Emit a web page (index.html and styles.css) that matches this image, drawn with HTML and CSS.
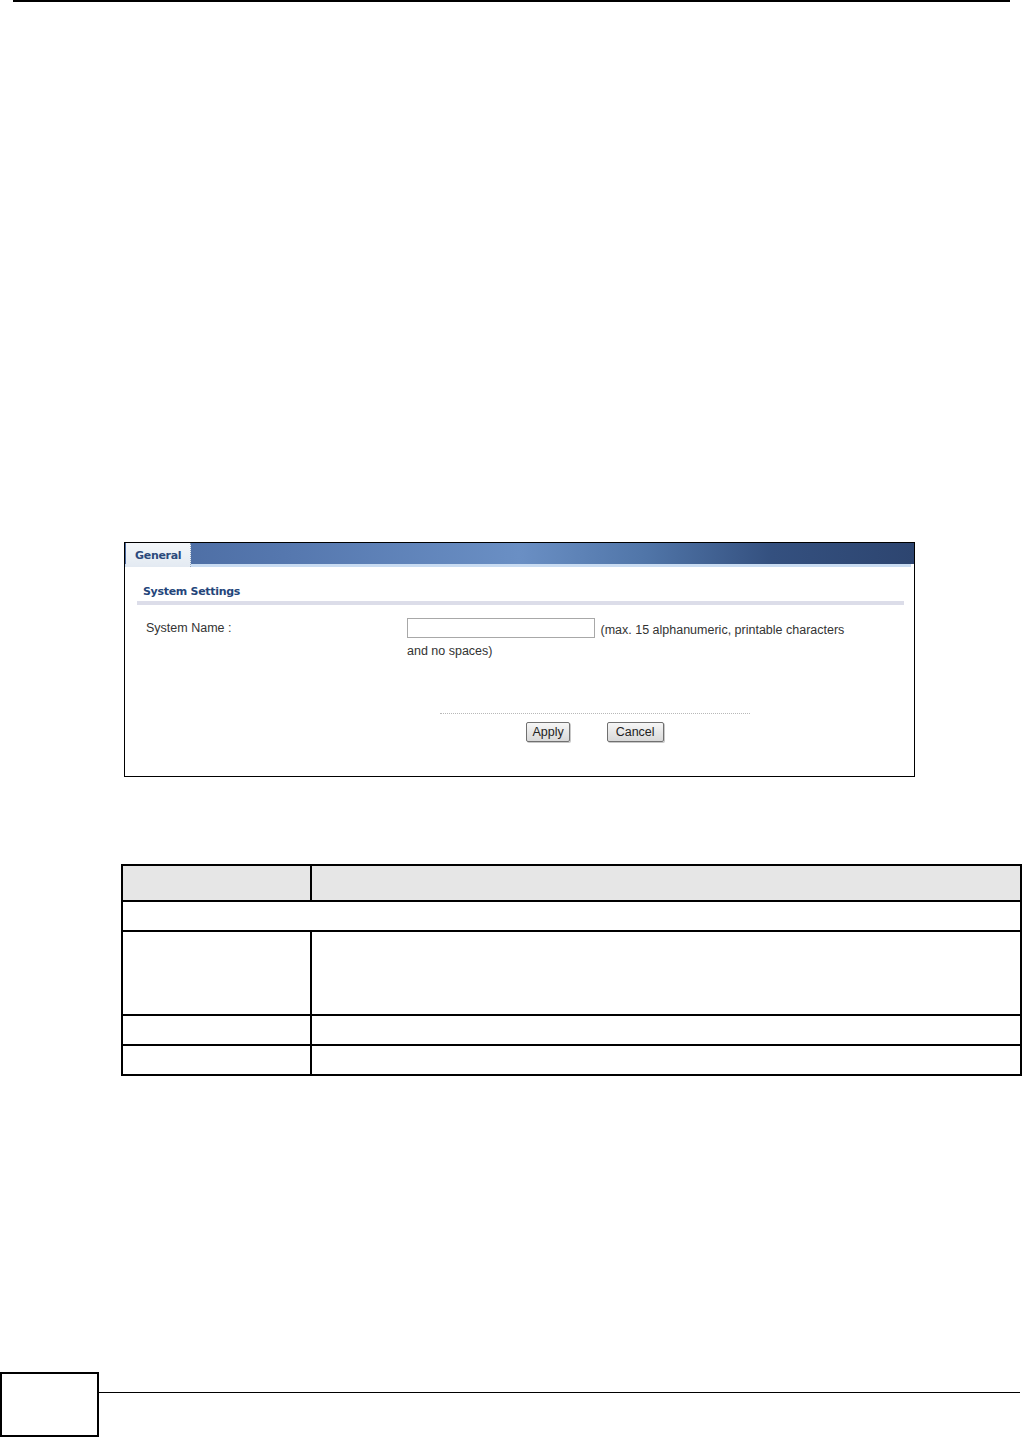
FILE: index.html
```html
<!DOCTYPE html>
<html lang="en">
<head>
    <meta charset="UTF-8">
    <meta name="viewport" content="width=device-width, initial-scale=1.0">
    <title>General</title>
    <link rel="stylesheet" href="styles.css">
</head>
<body>
    <div class="page">
        <div class="top-rule"></div>

        <div class="figure">
            <div class="tab-bar">
                <div class="tab">General</div>
            </div>
            <div class="tab-line"></div>
            <div class="panel">
                <div class="section-title">System Settings</div>
                <div class="form-row">
                    <label for="sysName">System Name :</label>
                    <div class="field">
                        <input type="text" id="sysName">
                        <span class="hint">(max. 15 alphanumeric, printable characters</span>
                        <div class="hint-more">and no spaces)</div>
                    </div>
                </div>
                <div class="actions">
                    <button type="button" class="btn">Apply</button>
                    <button type="button" class="btn btn-wide">Cancel</button>
                </div>
            </div>
        </div>

        <table class="desc">
            <tr class="head"><td class="label-col"></td><td></td></tr>
            <tr><td colspan="2"></td></tr>
            <tr class="tall"><td></td><td></td></tr>
            <tr><td></td><td></td></tr>
            <tr><td></td><td></td></tr>
        </table>

        <div class="footer">
            <div class="page-box"></div>
            <div class="footer-rule"></div>
        </div>
    </div>
</body>
</html>
```

FILE: styles.css
```css
body {
    margin: 0;
    background-color: #fff;
    font-family: 'Liberation Sans', Arial, sans-serif;
}
.page {
    width: 1023px;
    height: 1437px;
    display: flex;
    flex-direction: column;
}
.top-rule {
    height: 2px;
    margin: 0 13px;
    background-color: #000;
}

/* screenshot of the web configurator */
.figure {
    margin: 540px 0 0 124px;
    width: 789px;
    height: 233px;
    border: 1px solid #000;
    background-color: #fff;
}
.tab-bar {
    height: 21px;
    padding-left: 1px;
    background: linear-gradient(to right, #4a6aa0 0%, #5577ae 20%, #6a8fc4 50%, #5075a8 66%, #34507f 82%, #2d4570 100%);
    display: flex;
}
.tab {
    height: 24px;
    padding: 0 9px;
    box-sizing: border-box;
    width: 65px;
    background: linear-gradient(#f4f7fa, #e3eaf2);
    border-right: 1px dotted #8da2bf;
    font-family: 'DejaVu Sans', Tahoma, sans-serif;
    font-weight: bold;
    font-size: 11px;
    letter-spacing: -0.3px;
    color: #2b4a7c;
    line-height: 26px;
    position: relative;
    z-index: 1;
}
.tab-line {
    height: 3px;
    margin-right: 3px;
    background-color: #c9dcf2;
}
.panel {
    padding: 0 10px 0 12px;
}
.section-title {
    margin-top: 18px;
    padding: 0 0 3px 6px;
    font-family: 'DejaVu Sans', Tahoma, sans-serif;
    font-weight: bold;
    font-size: 11px;
    letter-spacing: -0.3px;
    color: #24457a;
    border-bottom: 4px solid #dcdde9;
}
.form-row {
    display: flex;
    margin-top: 13px;
    font-size: 12.5px;
    color: #333;
}
.form-row label {
    width: 261px;
    padding-left: 9px;
    padding-top: 3px;
}
.field input {
    width: 188px;
    height: 20px;
    box-sizing: border-box;
    border: 1px solid #a8a8a8;
    margin: 0;
    vertical-align: middle;
}
.hint {
    margin-left: 2px;
    vertical-align: -3px;
}
.hint-more {
    margin-top: 6px;
}
.actions {
    box-sizing: border-box;
    margin: 55px 0 0 303px;
    width: 310px;
    padding-top: 8px;
    border-top: 1px dotted #b8b8b8;
    display: flex;
    justify-content: center;
    gap: 37px;
}
.btn {
    height: 20px;
    padding: 0 5px;
    font-family: 'Liberation Sans', Arial, sans-serif;
    font-size: 12.5px;
    color: #222;
    background: linear-gradient(#f6f6f6, #d9d9d9);
    border: 1px solid #707070;
    border-radius: 2px;
    box-shadow: 1px 1px 0 #c8c8c8;
}
.btn-wide {
    padding: 0 8px;
}

/* field description table */
.desc {
    margin: 87px 0 0 121px;
    width: 901px;
    border-collapse: collapse;
}
.desc td {
    border: 2px solid #000;
    height: 28px;
    padding: 0;
}
.desc .label-col {
    width: 187px;
}
.desc .head td {
    height: 34px;
    background-color: #e6e6e6;
}
.desc .tall td {
    height: 82px;
}

.footer {
    margin-top: auto;
    display: flex;
    align-items: flex-start;
    height: 65px;
}
.page-box {
    width: 95px;
    height: 61px;
    border: 2px solid #000;
}
.footer-rule {
    margin-top: 20px;
    width: 921px;
    height: 1px;
    background-color: #000;
}
```
